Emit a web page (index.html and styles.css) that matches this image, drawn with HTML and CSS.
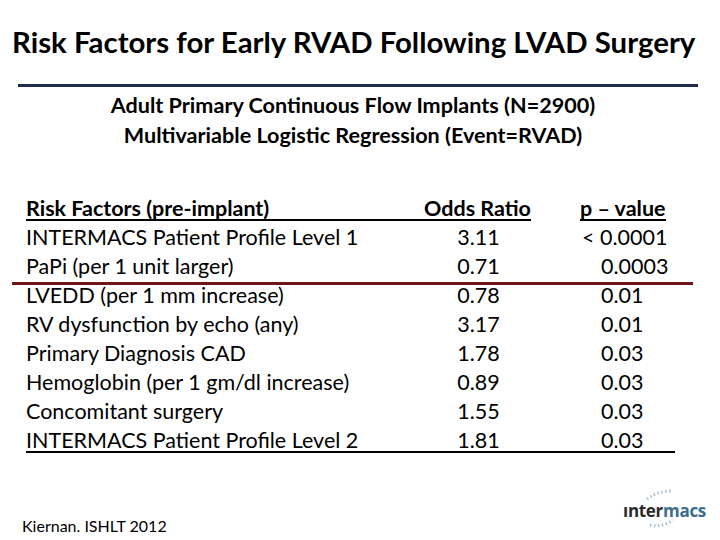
FILE: index.html
```html
<!DOCTYPE html>
<html>
<head>
<meta charset="utf-8">
<link rel="stylesheet" href="styles.css">
</head>
<body>
<div class="slide">
  <h1 class="title">Risk Factors for Early RVAD Following LVAD Surgery</h1>
  <div class="navy-rule"></div>
  <div class="subtitle">
    <div>Adult Primary Continuous Flow Implants (N=2900)</div>
    <div>Multivariable Logistic Regression (Event=RVAD)</div>
  </div>
  <div class="table">
    <div class="row head">
      <div class="c1"><span class="u u-full">Risk Factors (pre-implant)</span></div>
      <div class="c2"><span class="u u-odds">Odds Ratio</span></div>
      <div class="c3"><span class="u u-p">p – value</span></div>
    </div>
    <div class="row"><div class="c1">INTERMACS Patient Profile Level 1</div><div class="c2">3.11</div><div class="c3 lt">&lt; 0.0001</div></div>
    <div class="row"><div class="c1">PaPi (per 1 unit larger)</div><div class="c2">0.71</div><div class="c3">0.0003</div></div>
    <div class="row"><div class="c1">LVEDD (per 1 mm increase)</div><div class="c2">0.78</div><div class="c3">0.01</div></div>
    <div class="row"><div class="c1">RV dysfunction by echo (any)</div><div class="c2">3.17</div><div class="c3">0.01</div></div>
    <div class="row"><div class="c1">Primary Diagnosis CAD</div><div class="c2">1.78</div><div class="c3">0.03</div></div>
    <div class="row"><div class="c1">Hemoglobin (per 1 gm/dl increase)</div><div class="c2">0.89</div><div class="c3">0.03</div></div>
    <div class="row"><div class="c1">Concomitant surgery</div><div class="c2">1.55</div><div class="c3">0.03</div></div>
    <div class="row last"><div class="c1">INTERMACS Patient Profile Level 2</div><div class="c2">1.81</div><div class="c3">0.03</div></div>
  </div>
  <div class="red-rule"></div>
  <div class="footer">
    <div class="cite">Kiernan. ISHLT 2012</div>
    <div class="logo">
      <svg class="arcs" width="90" height="44" viewBox="0 0 90 44">
        <path d="M24 12 Q34 4 50 4" fill="none" stroke="#a9c3d6" stroke-width="3" stroke-dasharray="1.5 2.5"/>
        <path d="M27 38 Q38 41 50 33" fill="none" stroke="#a9c3d6" stroke-width="3" stroke-dasharray="1.5 2.5"/>
      </svg>
      <span class="inter">ınter</span><span class="macs">macs</span>
    </div>
  </div>
</div>
</body>
</html>
```
FILE: styles.css
```css
html, body {
  margin: 0;
  padding: 0;
  background: #fff;
}
.slide {
  position: relative;
  width: 720px;
  height: 540px;
  overflow: hidden;
  font-family: Lato, "Open Sans", sans-serif;
  color: #000;
}
.title {
  margin: 26px 0 0 12px;
  font-size: 29.4px;
  font-weight: 700;
  line-height: 32px;
  white-space: nowrap;
}
.navy-rule {
  margin: 26px 22px 0 18px;
  height: 3px;
  background: #1f2e4c;
}
.subtitle {
  margin-top: 3px;
  padding-right: 14px;
  text-align: center;
  font-size: 21.6px;
  font-weight: 700;
  line-height: 30px;
}
.table {
  margin: 44px 45px 0 26px;
  border-bottom: 2px solid #000;
}
.row {
  display: grid;
  grid-template-columns: 370px 165px 1fr;
  font-size: 21.5px;
  line-height: 29px;
  white-space: nowrap;
}
.row.head {
  font-weight: 700;
}
.row.last {
  margin-bottom: -4px;
}
.c2 {
  text-align: center;
}
.c3 {
  padding-left: 40px;
}
.c3.lt {
  padding-left: 21px;
}
.head .c2 {
  text-align: left;
}
.head .c3 {
  padding-left: 19px;
}
.u {
  display: inline-block;
  line-height: 21px;
  border-bottom: 2px solid #000;
}
.u-full {
  width: 100%;
}
.u-odds {
  padding-left: 28px;
}
.red-rule {
  position: absolute;
  left: 12px;
  top: 282px;
  width: 681px;
  height: 3px;
  background: #6e1616;
}
.footer {
  display: flex;
  justify-content: space-between;
  align-items: flex-end;
  margin: 48px 14px 0 22px;
}
.cite {
  font-size: 16px;
  line-height: 18px;
}
.logo {
  position: relative;
  font-family: "Open Sans", Lato, sans-serif;
  font-weight: 700;
  font-size: 17px;
  line-height: 20px;
  letter-spacing: -0.3px;
  margin-bottom: 14px;
}
.arcs {
  position: absolute;
  left: 0;
  top: -14px;
}
.inter {
  position: relative;
  color: #2b2b2b;
}
.macs {
  position: relative;
  color: #3b6e8e;
}
```
